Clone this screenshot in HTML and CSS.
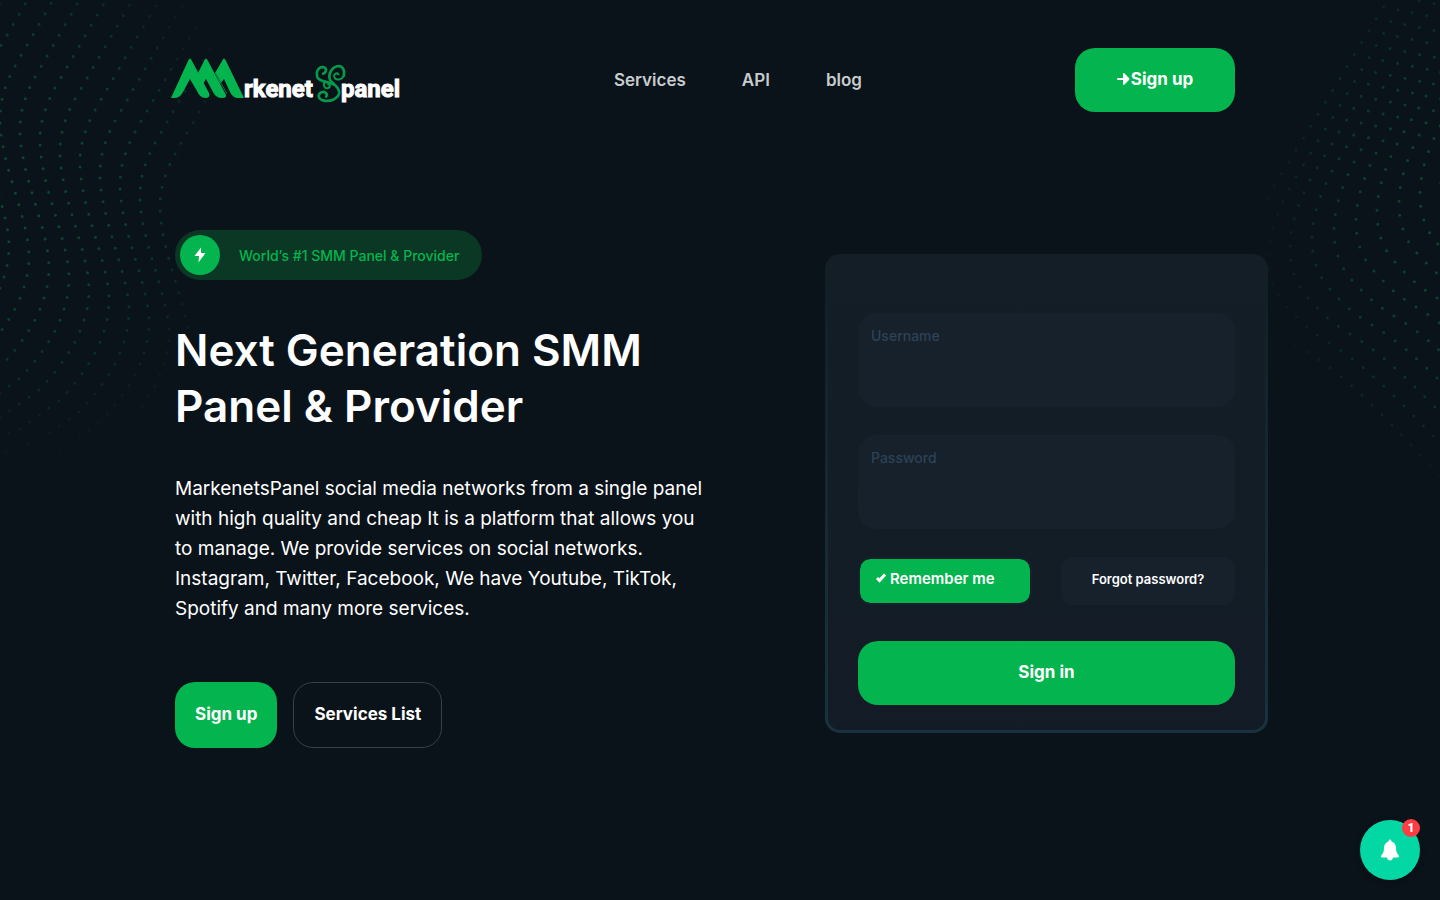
FILE: index.html
```html
<!DOCTYPE html>
<html lang="en">

<head>
    <meta charset="UTF-8">
    <meta name="viewport" content="width=device-width, initial-scale=1.0">
    <title>Markenets Panel</title>
    <link rel="stylesheet" href="styles.css">
</head>

<body>

<div class="hero">

    <!-- dotted waves, left and right -->
    <svg class="dots dots-left" width="320" height="480" viewBox="0 0 320 480" aria-hidden="true">
        <defs>
            <radialGradient id="fade-left" gradientUnits="userSpaceOnUse" cx="0" cy="0" r="1" gradientTransform="translate(20 185) scale(240 285)">
                <stop offset="0" stop-color="#fff"/>
                <stop offset="0.5" stop-color="#fff" stop-opacity="0.8"/>
                <stop offset="1" stop-color="#fff" stop-opacity="0"/>
            </radialGradient>
            <mask id="mask-left" maskUnits="userSpaceOnUse" x="0" y="0" width="320" height="480">
                <rect width="320" height="480" fill="url(#fade-left)"/>
            </mask>
            <path id="wave-left" d="M167 -193 L49 7 L19 59 Q-1 92 0 121 C1 165 29 220 29 256 C29 295 5 330 -20 356 L-60 385 L-160 420"/>
        </defs>
        <g class="wave" mask="url(#mask-left)">
            <use href="#wave-left" x="-40" y="-20"/>
            <use href="#wave-left" x="-20" y="-10"/>
            <use href="#wave-left"/>
            <use href="#wave-left" x="20" y="11"/>
            <use href="#wave-left" x="40" y="22"/>
            <use href="#wave-left" x="60" y="33"/>
            <use href="#wave-left" x="80" y="44"/>
            <use href="#wave-left" x="100" y="55"/>
            <use href="#wave-left" x="120" y="66"/>
            <use href="#wave-left" x="140" y="77"/>
            <use href="#wave-left" x="160" y="88"/>
        </g>
    </svg>
    <svg class="dots dots-right" width="200" height="500" viewBox="0 0 200 500" aria-hidden="true">
        <defs>
            <radialGradient id="fade-right" gradientUnits="userSpaceOnUse" cx="0" cy="0" r="1" gradientTransform="translate(210 215) scale(200 285)">
                <stop offset="0" stop-color="#fff"/>
                <stop offset="0.5" stop-color="#fff" stop-opacity="0.8"/>
                <stop offset="1" stop-color="#fff" stop-opacity="0"/>
            </radialGradient>
            <mask id="mask-right" maskUnits="userSpaceOnUse" x="0" y="0" width="200" height="500">
                <rect width="200" height="500" fill="url(#fade-right)"/>
            </mask>
            <path id="wave-right" d="M210 -370 Q140 -260 80 -160 L29 -77 C-10 -15 -10 35 23 64 Q35 80 67 99 Q110 125 220 250"/>
        </defs>
        <g class="wave" mask="url(#mask-right)">
            <use href="#wave-right" x="202" y="177"/>
            <use href="#wave-right" x="181" y="186"/>
            <use href="#wave-right" x="160" y="195"/>
            <use href="#wave-right" x="138" y="204"/>
            <use href="#wave-right" x="117" y="213"/>
            <use href="#wave-right" x="95" y="222"/>
            <use href="#wave-right" x="73" y="231"/>
            <use href="#wave-right" x="51" y="240"/>
            <use href="#wave-right" x="30" y="249"/>
            <use href="#wave-right" x="8" y="258"/>
        </g>
    </svg>

    <header class="navbar">
        <a class="logo" href="#" aria-label="Markenets panel">
            <svg width="232" height="48" viewBox="2 0 232 48">
                <g fill="#04b44e">
                    <path d="M1 42 L18 5 Q20 0 22 5 L39 37 Q41 42 35 42 Q30 42 27 35 L20 23 L13 36 Q10 42 4 42 Z"/>
                    <path d="M28 17 L34 5 Q36 0 38 5 L56 39 Q57 42 52 42 Q46 42 43 36 L36 23 L32 30 Z"/>
                    <path d="M45 17 L52 5 Q54 0 56 5 L74 42 H68 Q63 42 60 36 L54 23 L50 28 Z"/>
                </g>
                <path d="M46 18 L57 38" fill="none" stroke="#08763a"/>
                <text class="logo-text" x="74" y="41">rkenet</text>
                <!-- curly S between the two words -->
                <g class="logo-swirl" transform="translate(-10 -11) scale(0.333)">
                    <path stroke-width="8" d="M552 92 C556 70 544 61 532 64 C510 70 502 98 515 110 C528 122 540 132 538 145 C534 162 512 171 492 167 C476 164 472 150 483 143 C494 137 505 146 499 155"/>
                    <path stroke-width="8" d="M490 86 C500 82 503 68 489 66 C474 66 468 82 472 96 C479 112 502 108 522 119"/>
                    <path stroke-width="6" d="M552 92 C546 106 526 108 523 95 C522 87 531 82 536 88 M495 110 C488 120 494 132 505 129 C513 126 511 116 505 118"/>
                </g>
                <text class="logo-text" x="171" y="41">panel</text>
            </svg>
        </a>
        <nav class="menu">
            <a href="#">Services</a>
            <a href="#">API</a>
            <a href="#">blog</a>
        </nav>
        <a class="btn btn-nav" href="#">
            <svg width="14" height="14" viewBox="0 0 14 14" aria-hidden="true">
                <path d="M1 7 H8" stroke="#fff" stroke-width="2" stroke-linecap="round"/>
                <path d="M6 2 Q6 1 7 1 L12 6 Q13 7 12 8 L7 13 Q6 13 6 12 Z" fill="#fff"/>
            </svg>Sign up
        </a>
    </header>

    <main class="content">
        <section class="intro">
            <div class="tag">
                <span class="tag-icon">
                    <svg width="12" height="16" viewBox="0 0 12 16" aria-hidden="true">
                        <path d="M7 0.500 L0.500 9 H5 L4.500 15.500 L11.500 6 H7 Z" fill="#fff"/>
                    </svg>
                </span>
                <span>World’s #1 SMM Panel &amp; Provider</span>
            </div>
            <h1>Next Generation SMM<br>Panel &amp; Provider</h1>
            <p>MarkenetsPanel social media networks from a single panel<br>
            with high quality and cheap It is a platform that allows you<br>
            to manage. We provide services on social networks.<br>
            Instagram, Twitter, Facebook, We have Youtube, TikTok,<br>
            Spotify and many more services.</p>
            <div class="actions">
                <a class="btn" href="#">Sign up</a>
                <a class="btn btn-outline" href="#">Services List</a>
            </div>
        </section>

        <form class="login">
            <div class="field">
                <input type="text" id="username" placeholder="Username" aria-label="Username">
            </div>
            <div class="field">
                <input type="password" id="password" placeholder="Password" aria-label="Password">
            </div>
            <div class="login-row">
                <label class="remember" for="remember">
                    <input type="checkbox" id="remember" checked>
                    <svg width="12" height="10" viewBox="0 0 12 10" aria-hidden="true">
                        <path d="M2 5 L4.500 7.500 L10 1.500" fill="none" stroke="#fff" stroke-width="3"/>
                    </svg>
                    <span>Remember me</span>
                </label>
                <a class="forgot" href="#">Forgot password?</a>
            </div>
            <button class="btn btn-login" type="submit">Sign in</button>
        </form>
    </main>

    <button class="bell" type="button" aria-label="Notifications">
        <svg width="20" height="22" viewBox="0 0 20 22" aria-hidden="true">
            <path d="M10 0.500 Q11.500 0.500 11.500 2.500 Q16 4 16 9 Q16 14 18.500 16 Q20 18.500 18 18.500 H13 Q12.500 21.500 10 21.500 Q7.500 21.500 7 18.500 H2 Q0 18.500 1.500 16 Q4 14 4 9 Q4 4 8.500 2.500 Q8.500 0.500 10 0.500 Z" fill="#fff"/>
        </svg>
        <span class="bell-count">1</span>
    </button>
</div>

</body>
</html>
```

FILE: styles.css
```css
* {
    box-sizing: border-box;
}

body {
    margin: 0;
    background-color: #0b131a;
    color: #fff;
    font-family: "Inter", "Open Sans", sans-serif;
}

a {
    color: inherit;
    text-decoration: none;
}

.hero {
    position: relative;
    min-height: 100vh;
    padding: 48px 172px 0;
    overflow: hidden;
}

.dots {
    position: absolute;
    top: 0;
}

.dots-left {
    left: 0;
}

.dots-right {
    right: 0;
}

.wave {
    fill: none;
    stroke: #0b4a2e;
    stroke-width: 3;
    stroke-linecap: round;
    stroke-dasharray: 0 12;
}

.dots-right .wave {
    stroke-dasharray: 0 14;
}

/* header */

.navbar {
    position: relative;
    display: grid;
    grid-template-columns: 442px 1fr auto;
    align-items: center;
    height: 64px;
    padding-right: 33px;
}

.logo svg {
    display: block;
    overflow: visible;
}

.logo-text {
    fill: #fff;
    stroke: #fff;
    font-family: "Roboto", sans-serif;
    font-size: 24px;
    font-weight: 700;
}

.logo-swirl {
    fill: none;
    stroke: #07994a;
    stroke-linecap: round;
}

.menu {
    display: flex;
    gap: 56px;
    font-size: 17px;
    font-weight: 600;
    color: #c8cccf;
}

.btn {
    display: flex;
    align-items: center;
    justify-content: center;
    height: 64px;
    padding: 0 20px 2px;
    border: 0;
    border-radius: 20px;
    background-color: #04b44e;
    color: #fff;
    font-family: inherit;
    font-size: 17px;
    font-weight: 700;
}

.btn-nav {
    width: 160px;
}

/* hero content */

.content {
    position: relative;
    display: flex;
    align-items: flex-start;
    justify-content: space-between;
    padding-top: 118px;
}

.intro {
    padding-left: 3px;
}

.tag {
    display: inline-flex;
    align-items: center;
    gap: 19px;
    height: 50px;
    padding: 0 23px 0 5px;
    border-radius: 25px;
    background-color: #0b3725;
    color: #04b44e;
    font-size: 14px;
    font-weight: 500;
}

.tag-icon {
    display: flex;
    align-items: center;
    justify-content: center;
    width: 40px;
    height: 40px;
    border-radius: 50%;
    background-color: #04b44e;
}

h1 {
    margin: 42px 0 0;
    font-size: 44px;
    font-weight: 600;
    line-height: 56px;
}

p {
    margin: 40px 0 0;
    font-size: 19px;
    line-height: 30px;
}

.actions {
    display: flex;
    gap: 16px;
    margin-top: 58px;
}

.actions .btn {
    height: 66px;
}

.btn-outline {
    border: 1px solid #393f46;
    background-color: transparent;
}

/* login card */

.login {
    width: 443px;
    margin-top: 24px;
    padding: 56px 30px 25px;
    border: 3px solid transparent;
    border-radius: 15px;
    background: linear-gradient(#131e26, #131c26) padding-box, linear-gradient(#131e26, #19323f) border-box;
}

.field {
    height: 94px;
    margin-bottom: 28px;
    padding: 12px 13px;
    border-radius: 18px;
    background-color: #16212c;
}

.field input {
    width: 100%;
    padding: 0;
    border: 0;
    outline: 0;
    background: transparent;
    color: #fff;
    font-family: inherit;
    font-size: 14px;
    font-weight: 500;
    line-height: 20px;
}

.field input::placeholder {
    color: #2d4256;
    opacity: 1;
}

.login-row {
    display: flex;
    justify-content: space-between;
    height: 48px;
}

.remember {
    position: relative;
    display: flex;
    align-items: center;
    gap: 3px;
    width: 174px;
    padding: 0 15px 6px;
    border: 2px solid #16212c;
    border-radius: 12px;
    background-color: #04b44e;
    background-clip: padding-box;
    font-size: 15px;
    font-weight: 600;
}

.remember input {
    position: absolute;
    opacity: 0;
}

.forgot {
    display: flex;
    align-items: center;
    justify-content: center;
    width: 174px;
    padding-bottom: 4px;
    border-radius: 12px;
    background-color: #16212c;
    font-size: 13px;
    font-weight: 600;
}

.btn-login {
    width: 100%;
    margin-top: 36px;
}

/* notification bell */

.bell {
    position: fixed;
    right: 20px;
    bottom: 20px;
    display: flex;
    align-items: center;
    justify-content: center;
    width: 60px;
    height: 60px;
    padding: 0;
    border: 0;
    border-radius: 50%;
    background-color: #03d8a5;
    box-shadow: 0 2px 6px rgba(0, 0, 0, 0.3);
}

.bell-count {
    position: absolute;
    top: -1px;
    right: 0;
    width: 18px;
    height: 18px;
    border-radius: 50%;
    background-color: #fd3c44;
    color: #fff;
    font-family: "Roboto", sans-serif;
    font-size: 12px;
    font-weight: 900;
    line-height: 18px;
}
```
